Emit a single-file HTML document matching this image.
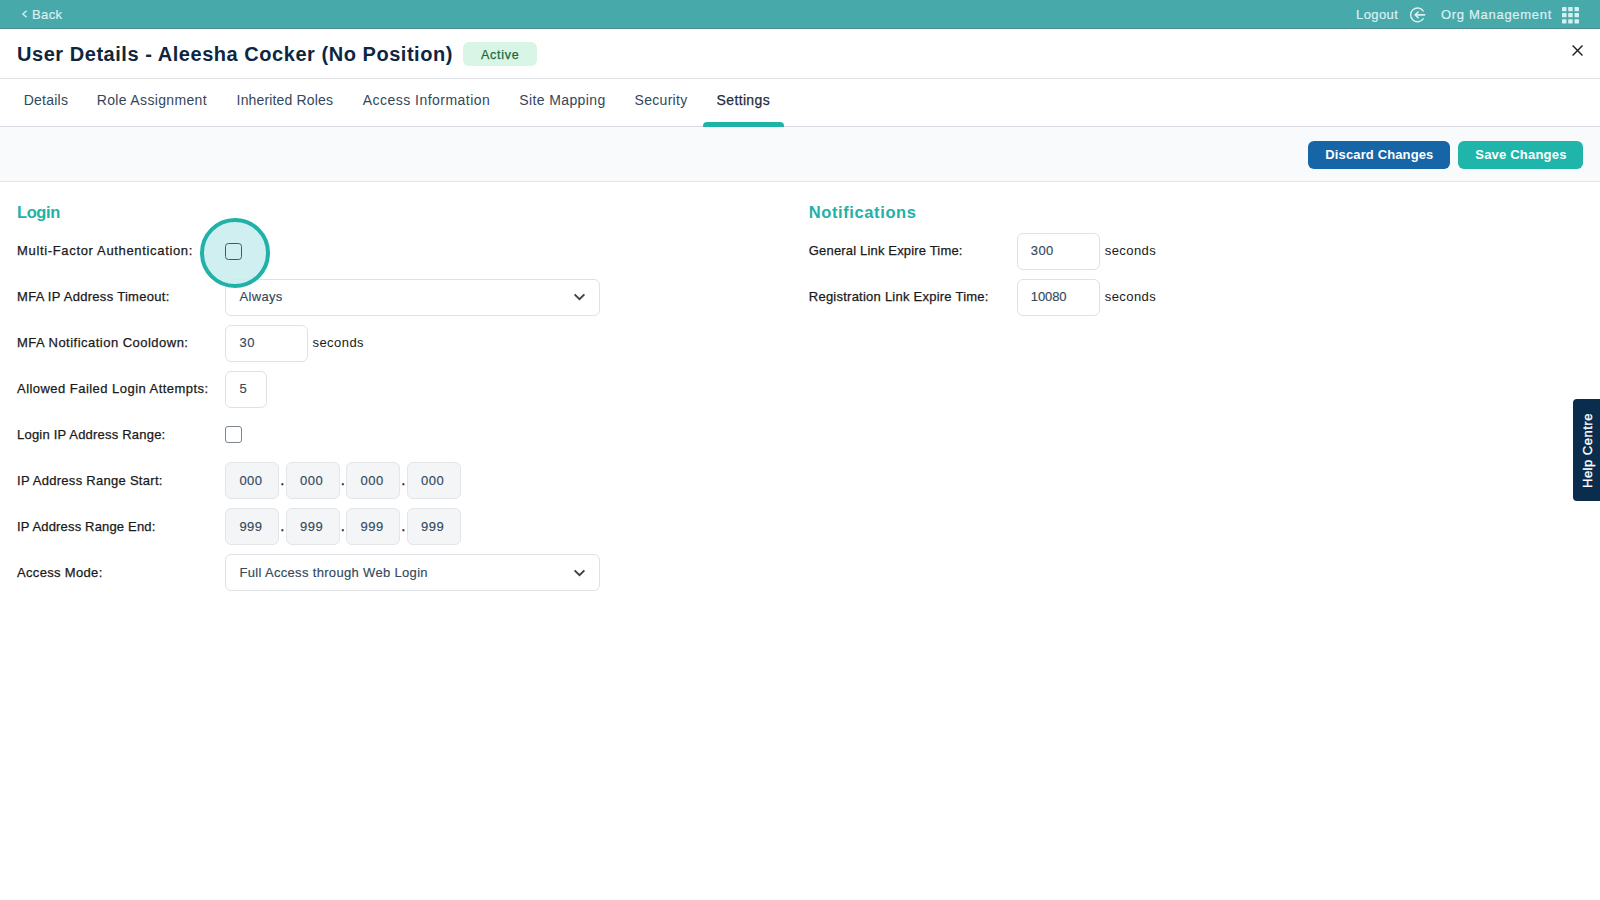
<!DOCTYPE html>
<html><head><meta charset="utf-8">
<style>
*{margin:0;padding:0;box-sizing:border-box}
html,body{width:1600px;height:900px;overflow:hidden;background:#fff}
body{position:relative;font-family:"Liberation Sans",sans-serif;color:#1c1c1c}
.a{position:absolute;white-space:nowrap}
.t{position:absolute;white-space:nowrap;line-height:1}
#topbar{left:0;top:0;width:1600px;height:28px;background:#48a9ab}
#topline{left:0;top:28px;width:1600px;height:1px;background:#4c8e8f}
.tb{color:#dcf0f1;font-size:13px;-webkit-text-stroke:0.2px #dcf0f1}
#title{left:17px;top:43.8px;font-size:20px;font-weight:bold;color:#0d2641;letter-spacing:0.54px}
#badge{left:463px;top:42px;width:74px;height:24px;background:#d8f5e5;border-radius:6px}
#badgetxt{left:481px;top:48.6px;font-size:12.5px;color:#1b6a3c;letter-spacing:0.75px;-webkit-text-stroke:0.25px #1b6a3c}
#hline1{left:0;top:78px;width:1600px;height:1px;background:#e1e2e8}
.tab{font-size:14px;color:#33475b;top:93.4px}
#tabline{left:703px;top:122px;width:81px;height:5px;background:#1fb2a9;border-radius:4px 4px 0 0}
#hline2{left:0;top:126px;width:1600px;height:1px;background:#d9dae2}
#actbar{left:0;top:127px;width:1600px;height:55px;background:#f9fafb}
#hline3{left:0;top:181px;width:1600px;height:1px;background:#e3e4e9}
.btn{height:28px;top:141px;border-radius:6px}
.btxt{color:#fff;font-size:13px;font-weight:bold;top:148.4px}
.sect{font-size:16.5px;font-weight:bold;color:#22b1a6;top:203.5px}
.lbl{font-size:13px;color:#1a1a1a;-webkit-text-stroke:0.25px #1a1a1a}
.inp{border:1px solid #dfe1e4;border-radius:6px;height:37px;background:#fff}
.val{font-size:13px;color:#34495c;-webkit-text-stroke:0.15px #34495c}
.ip{border:1px solid #e2e5e9;border-radius:6px;height:37px;width:54px;background:#f3f5f7}
.dot{font-size:13px;color:#222;-webkit-text-stroke:0.5px #222}
.chev{position:absolute;width:13px;height:8px}
</style></head>
<body>
<div class="a" id="topbar"></div>
<div class="a" id="topline"></div>
<svg class="a" style="left:21px;top:10px" width="7" height="8" viewBox="0 0 7 8"><path d="M5.2 1.2 L1.8 4 L5.2 6.8" fill="none" stroke="#c5ecef" stroke-width="1.5" stroke-linecap="round" stroke-linejoin="round"/></svg>
<div class="t tb" style="left:32px;top:8px;letter-spacing:0.37px">Back</div>
<div class="t tb" style="left:1356px;top:8.2px;letter-spacing:0.42px">Logout</div>
<svg class="a" style="left:1409px;top:7px" width="17" height="16" viewBox="0 0 17 16">
 <path d="M14.15 3.9 A6.9 6.9 0 1 0 14.15 11.8" fill="none" stroke="#dcf0f1" stroke-width="1.4" stroke-linecap="round"/>
 <path d="M15.6 7.85 H6.3 M9.1 5 L6.2 7.85 L9.1 10.7" fill="none" stroke="#dcf0f1" stroke-width="1.6" stroke-linecap="round" stroke-linejoin="round"/>
</svg>
<div class="t tb" style="left:1441px;top:8.2px;letter-spacing:0.7px">Org Management</div>
<svg class="a" style="left:1562.3px;top:6.7px" width="18" height="17" viewBox="0 0 18 17"><g fill="#d6f0f2"><rect x="0.0" y="0.0" width="4.5" height="4.2" rx="0.4"/><rect x="6.2" y="0.0" width="4.5" height="4.2" rx="0.4"/><rect x="12.5" y="0.0" width="4.5" height="4.2" rx="0.4"/><rect x="0.0" y="6.1" width="4.5" height="4.2" rx="0.4"/><rect x="6.2" y="6.1" width="4.5" height="4.2" rx="0.4"/><rect x="12.5" y="6.1" width="4.5" height="4.2" rx="0.4"/><rect x="0.0" y="12.3" width="4.5" height="4.2" rx="0.4"/><rect x="6.2" y="12.3" width="4.5" height="4.2" rx="0.4"/><rect x="12.5" y="12.3" width="4.5" height="4.2" rx="0.4"/></g></svg>

<div class="t" id="title">User Details - Aleesha Cocker (No Position)</div>
<div class="a" id="badge"></div>
<div class="t" id="badgetxt">Active</div>
<svg class="a" style="left:1571px;top:43.5px" width="13" height="13" viewBox="0 0 13 13">
 <path d="M1.6 1.6 L11.5 11.4 M11.5 1.6 L1.6 11.4" stroke="#1e1e1e" stroke-width="1.4" fill="none"/>
</svg>
<div class="a" id="hline1"></div>

<div class="t tab" style="left:23.7px;letter-spacing:0.25px">Details</div>
<div class="t tab" style="left:96.7px;letter-spacing:0.35px">Role Assignment</div>
<div class="t tab" style="left:236.6px;letter-spacing:0.16px">Inherited Roles</div>
<div class="t tab" style="left:362.8px;letter-spacing:0.47px">Access Information</div>
<div class="t tab" style="left:519.3px;letter-spacing:0.38px">Site Mapping</div>
<div class="t tab" style="left:634.6px;letter-spacing:0.29px">Security</div>
<div class="t tab" style="left:716.6px;letter-spacing:0.35px;color:#1f2d3b;-webkit-text-stroke:0.25px #1f2d3b">Settings</div>
<div class="a" id="hline2"></div>
<div class="a" id="tabline"></div>

<div class="a" id="actbar"></div>
<div class="a" id="hline3"></div>
<div class="a btn" style="left:1308px;width:142px;background:#1565a7"></div>
<div class="t btxt" style="left:1325.3px;letter-spacing:0.13px">Discard Changes</div>
<div class="a btn" style="left:1458px;width:125px;background:#20b5ab"></div>
<div class="t btxt" style="left:1475.3px;letter-spacing:0.2px">Save Changes</div>

<!-- Login -->
<div class="t sect" style="left:17px;letter-spacing:-0.4px">Login</div>
<div class="t lbl" style="left:17px;top:244.3px;letter-spacing:0.66px">Multi-Factor Authentication:</div>
<div class="t lbl" style="left:17px;top:290.3px;letter-spacing:0.3px">MFA IP Address Timeout:</div>
<div class="t lbl" style="left:17px;top:336.3px;letter-spacing:0.48px">MFA Notification Cooldown:</div>
<div class="t lbl" style="left:17px;top:382.3px;letter-spacing:0.46px">Allowed Failed Login Attempts:</div>
<div class="t lbl" style="left:17px;top:428.3px;letter-spacing:0.21px">Login IP Address Range:</div>
<div class="t lbl" style="left:17px;top:474.3px;letter-spacing:0.28px">IP Address Range Start:</div>
<div class="t lbl" style="left:17px;top:520.3px;letter-spacing:0.17px">IP Address Range End:</div>
<div class="t lbl" style="left:17px;top:566.3px;letter-spacing:0.33px">Access Mode:</div>

<!-- MFA IP select -->
<div class="a inp" style="left:225px;top:278.5px;width:375px"></div>
<div class="t val" style="left:239.6px;top:290.2px;letter-spacing:0.3px">Always</div>
<svg class="chev" style="left:572.6px;top:293.4px" width="14" height="9" viewBox="0 0 14 9"><path d="M1.5 1.5 L7 7 L12.5 1.5" fill="none" stroke="#3f3f3f" stroke-width="2.1"/></svg>

<!-- cooldown -->
<div class="a inp" style="left:225px;top:324.5px;width:83px"></div>
<div class="t val" style="left:239.6px;top:336.2px;letter-spacing:0.37px">30</div>
<div class="t lbl" style="left:312.5px;top:336.3px;letter-spacing:0.44px;-webkit-text-stroke:0">seconds</div>

<!-- attempts -->
<div class="a inp" style="left:225px;top:370.5px;width:42px"></div>
<div class="t val" style="left:239.6px;top:382.2px">5</div>

<!-- login ip range checkbox -->
<div class="a" style="left:225px;top:426px;width:17px;height:17px;border:1px solid #7d858c;border-radius:3px;background:#fff"></div>

<!-- IP start -->
<div class="a ip" style="left:225px;top:461.5px"></div>
<div class="a ip" style="left:286px;top:461.5px"></div>
<div class="a ip" style="left:346px;top:461.5px"></div>
<div class="a ip" style="left:407px;top:461.5px"></div>
<div class="t val" style="left:239.4px;top:474.2px;letter-spacing:0.46px">000</div>
<div class="t val" style="left:300px;top:474.2px;letter-spacing:0.46px">000</div>
<div class="t val" style="left:360.5px;top:474.2px;letter-spacing:0.46px">000</div>
<div class="t val" style="left:421px;top:474.2px;letter-spacing:0.46px">000</div>
<div class="t dot" style="left:280.5px;top:473.8px">.</div>
<div class="t dot" style="left:341px;top:473.8px">.</div>
<div class="t dot" style="left:401.5px;top:473.8px">.</div>

<!-- IP end -->
<div class="a ip" style="left:225px;top:507.5px"></div>
<div class="a ip" style="left:286px;top:507.5px"></div>
<div class="a ip" style="left:346px;top:507.5px"></div>
<div class="a ip" style="left:407px;top:507.5px"></div>
<div class="t val" style="left:239.4px;top:520.2px;letter-spacing:0.46px">999</div>
<div class="t val" style="left:300px;top:520.2px;letter-spacing:0.46px">999</div>
<div class="t val" style="left:360.5px;top:520.2px;letter-spacing:0.46px">999</div>
<div class="t val" style="left:421px;top:520.2px;letter-spacing:0.46px">999</div>
<div class="t dot" style="left:280.5px;top:519.8px">.</div>
<div class="t dot" style="left:341px;top:519.8px">.</div>
<div class="t dot" style="left:401.5px;top:519.8px">.</div>

<!-- access mode -->
<div class="a inp" style="left:225px;top:553.5px;width:375px"></div>
<div class="t val" style="left:239.4px;top:566.2px;letter-spacing:0.33px">Full Access through Web Login</div>
<svg class="chev" style="left:572.6px;top:569.2px" width="14" height="9" viewBox="0 0 14 9"><path d="M1.5 1.5 L7 7 L12.5 1.5" fill="none" stroke="#3f3f3f" stroke-width="2.1"/></svg>

<!-- select under circle; circle focus ring on MFA checkbox -->
<div class="a" style="left:200px;top:218px;width:70px;height:70px;border-radius:50%;border:4px solid #20b2a9;background:rgba(200,236,238,0.85)"></div>
<div class="a" style="left:225px;top:243px;width:17px;height:17px;border:1.4px solid #3d5968;border-radius:3.5px"></div>

<!-- Notifications -->
<div class="t sect" style="left:808.8px;letter-spacing:0.6px">Notifications</div>
<div class="t lbl" style="left:808.8px;top:244.3px;letter-spacing:0.17px">General Link Expire Time:</div>
<div class="t lbl" style="left:808.8px;top:290.3px;letter-spacing:0.24px">Registration Link Expire Time:</div>
<div class="a inp" style="left:1017px;top:232.5px;width:83px"></div>
<div class="a inp" style="left:1017px;top:278.5px;width:83px"></div>
<div class="t val" style="left:1030.8px;top:244.2px;letter-spacing:0.37px">300</div>
<div class="t val" style="left:1030.8px;top:290.2px;letter-spacing:-0.1px">10080</div>
<div class="t lbl" style="left:1104.7px;top:244.3px;letter-spacing:0.44px;-webkit-text-stroke:0">seconds</div>
<div class="t lbl" style="left:1104.7px;top:290.3px;letter-spacing:0.44px;-webkit-text-stroke:0">seconds</div>

<!-- Help Centre -->
<div class="a" style="left:1573px;top:399px;width:30px;height:102px;background:#0b2d4d;border-radius:4px 0 0 4px"></div>
<div class="t" style="left:1581.2px;top:487.5px;font-size:13px;color:#fff;-webkit-text-stroke:0.3px #fff;transform-origin:0 0;transform:rotate(-90deg);letter-spacing:0.5px">Help Centre</div>
</body></html>
